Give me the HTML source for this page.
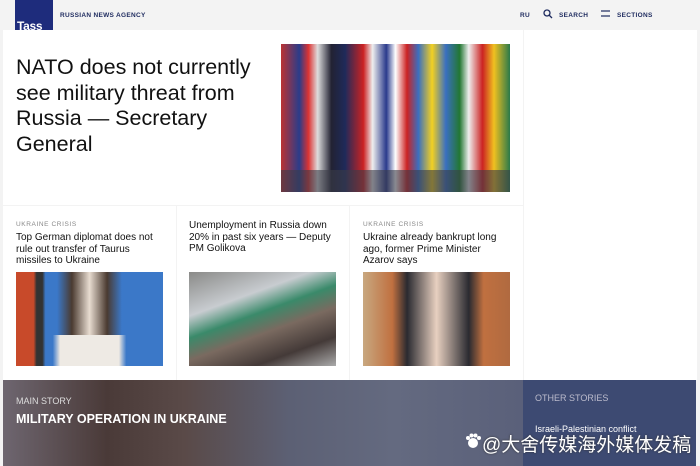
<!DOCTYPE html>
<html><head><meta charset="utf-8"><style>
*{margin:0;padding:0;box-sizing:border-box}
body{width:700px;height:466px;overflow:hidden;background:#f3f3f3;font-family:"Liberation Sans",sans-serif;position:relative}
.a{position:absolute}
.logo{left:15px;top:0;width:38px;height:36px;background:#1e2c7c;color:#fff;font-weight:bold;font-size:12px;line-height:12px;padding:20px 0 0 2px;letter-spacing:-0.3px;overflow:hidden}
.nav{top:12px;font-size:6.5px;font-weight:bold;color:#1d2a5e;letter-spacing:.3px}
.card{background:#fff}
h1{font-weight:normal;font-size:21.5px;line-height:25.5px;color:#111}
.tag{font-size:6.5px;color:#888;letter-spacing:.6px}
.t{font-size:10px;line-height:11.5px;color:#111}
</style></head><body>
<div class="a logo">Tass</div>
<div class="a nav" style="left:60px">RUSSIAN NEWS AGENCY</div>
<div class="a nav" style="left:520px">RU</div>
<svg class="a" style="left:543px;top:9px" width="10" height="10"><circle cx="4" cy="4" r="3" fill="none" stroke="#1d2a5e" stroke-width="1.3"/><line x1="6" y1="6" x2="9" y2="9" stroke="#1d2a5e" stroke-width="1.3"/></svg>
<div class="a nav" style="left:559px">SEARCH</div>
<svg class="a" style="left:601px;top:10px" width="9" height="8"><line x1="0" y1="1" x2="9" y2="1" stroke="#1d2a5e" stroke-width="1.2"/><line x1="0" y1="6" x2="9" y2="6" stroke="#1d2a5e" stroke-width="1.2"/></svg>
<div class="a nav" style="left:617px">SECTIONS</div>
<div class="a card" style="left:3px;top:30px;width:520px;height:175px"></div>
<div class="a card" style="left:524px;top:30px;width:173px;height:350px"></div>
<div class="a card" style="left:3px;top:206px;width:173px;height:174px"></div>
<div class="a card" style="left:177px;top:206px;width:172px;height:174px"></div>
<div class="a card" style="left:350px;top:206px;width:173px;height:174px"></div>
<h1 class="a" style="left:16px;top:55px;width:260px">NATO does not currently see military threat from Russia — Secretary General</h1>
<div class="a" style="left:281px;top:44px;width:229px;height:148px;background:linear-gradient(90deg,#b33 0,#2a3c8a 8%,#d33 12%,#ddd 16%,#223 22%,#1f2a5a 28%,#c22 36%,#eee 40%,#2a3a8c 46%,#fff 50%,#c22 55%,#3a6fc0 60%,#f2d022 66%,#3a6fc0 72%,#227733 78%,#eee 82%,#c22 88%,#f0c020 93%,#2a7a4a 100%)"></div>
<div class="a" style="left:281px;top:170px;width:229px;height:22px;background:#3a3c48;opacity:.6"></div>
<div class="a tag" style="left:16px;top:221px">UKRAINE CRISIS</div>
<div class="a t" style="left:16px;top:232px;width:150px">Top German diplomat does not rule out transfer of Taurus missiles to Ukraine</div>
<div class="a t" style="left:189px;top:220px;width:150px">Unemployment in Russia down 20% in past six years — Deputy PM Golikova</div>
<div class="a tag" style="left:363px;top:221px">UKRAINE CRISIS</div>
<div class="a t" style="left:363px;top:232px;width:150px">Ukraine already bankrupt long ago, former Prime Minister Azarov says</div>
<div class="a" style="left:16px;top:272px;width:147px;height:94px;background:linear-gradient(90deg,#c84a2a 0,#c84a2a 12%,#333 14%,#333 18%,#3b78c8 20%,#3b78c8 28%,#4a3a30 38%,#e8dcd0 50%,#4a3a30 62%,#3b78c8 72%,#3b78c8 100%)"></div>
<div class="a" style="left:16px;top:335px;width:147px;height:31px;background:linear-gradient(90deg,transparent 25%,#eeeae4 30%,#eeeae4 70%,transparent 75%)"></div>
<div class="a" style="left:189px;top:272px;width:147px;height:94px;background:linear-gradient(160deg,#8a8a88 0,#c8ccd0 30%,#3a8a6a 45%,#7a6a60 60%,#443a38 80%,#aaa 100%)"></div>
<div class="a" style="left:363px;top:272px;width:147px;height:94px;background:linear-gradient(90deg,#c8a880 0,#c07040 20%,#2a2a30 30%,#e8d0c0 50%,#2a2a30 72%,#c07040 82%,#b06a40 100%)"></div>
<div class="a" style="left:3px;top:380px;width:520px;height:86px;background:linear-gradient(90deg,#6e6670 0,#4a3a38 20%,#5a4a48 35%,#5c6074 55%,#646a80 75%,#5a607a 100%)"></div>
<div class="a" style="left:523px;top:380px;width:173px;height:86px;background:#3d4a72"></div>
<div class="a" style="left:16px;top:396px;color:#ddd;font-size:9px">MAIN STORY</div>
<div class="a" style="left:16px;top:412px;color:#fff;font-size:12.5px;font-weight:bold">MILITARY OPERATION IN UKRAINE</div>
<div class="a" style="left:535px;top:393px;color:#bbc;font-size:9px">OTHER STORIES</div>
<div class="a" style="left:535px;top:424px;color:#fff;font-size:9px">Israeli-Palestinian conflict</div>
<svg class="a" style="left:465px;top:433px" width="16" height="16"><circle cx="8" cy="10" r="5" fill="#fff"/><circle cx="3" cy="5" r="2" fill="#fff"/><circle cx="6.5" cy="2.5" r="2" fill="#fff"/><circle cx="10.5" cy="2.5" r="2" fill="#fff"/><circle cx="14" cy="5" r="2" fill="#fff"/></svg>
<div class="a" style="left:482px;top:430px;color:#fff;font-size:19px;font-family:'Liberation Sans','Noto Sans CJK SC',sans-serif;text-shadow:0 0 2px #333;white-space:nowrap">@大舍传媒海外媒体发稿</div>
</body></html>
